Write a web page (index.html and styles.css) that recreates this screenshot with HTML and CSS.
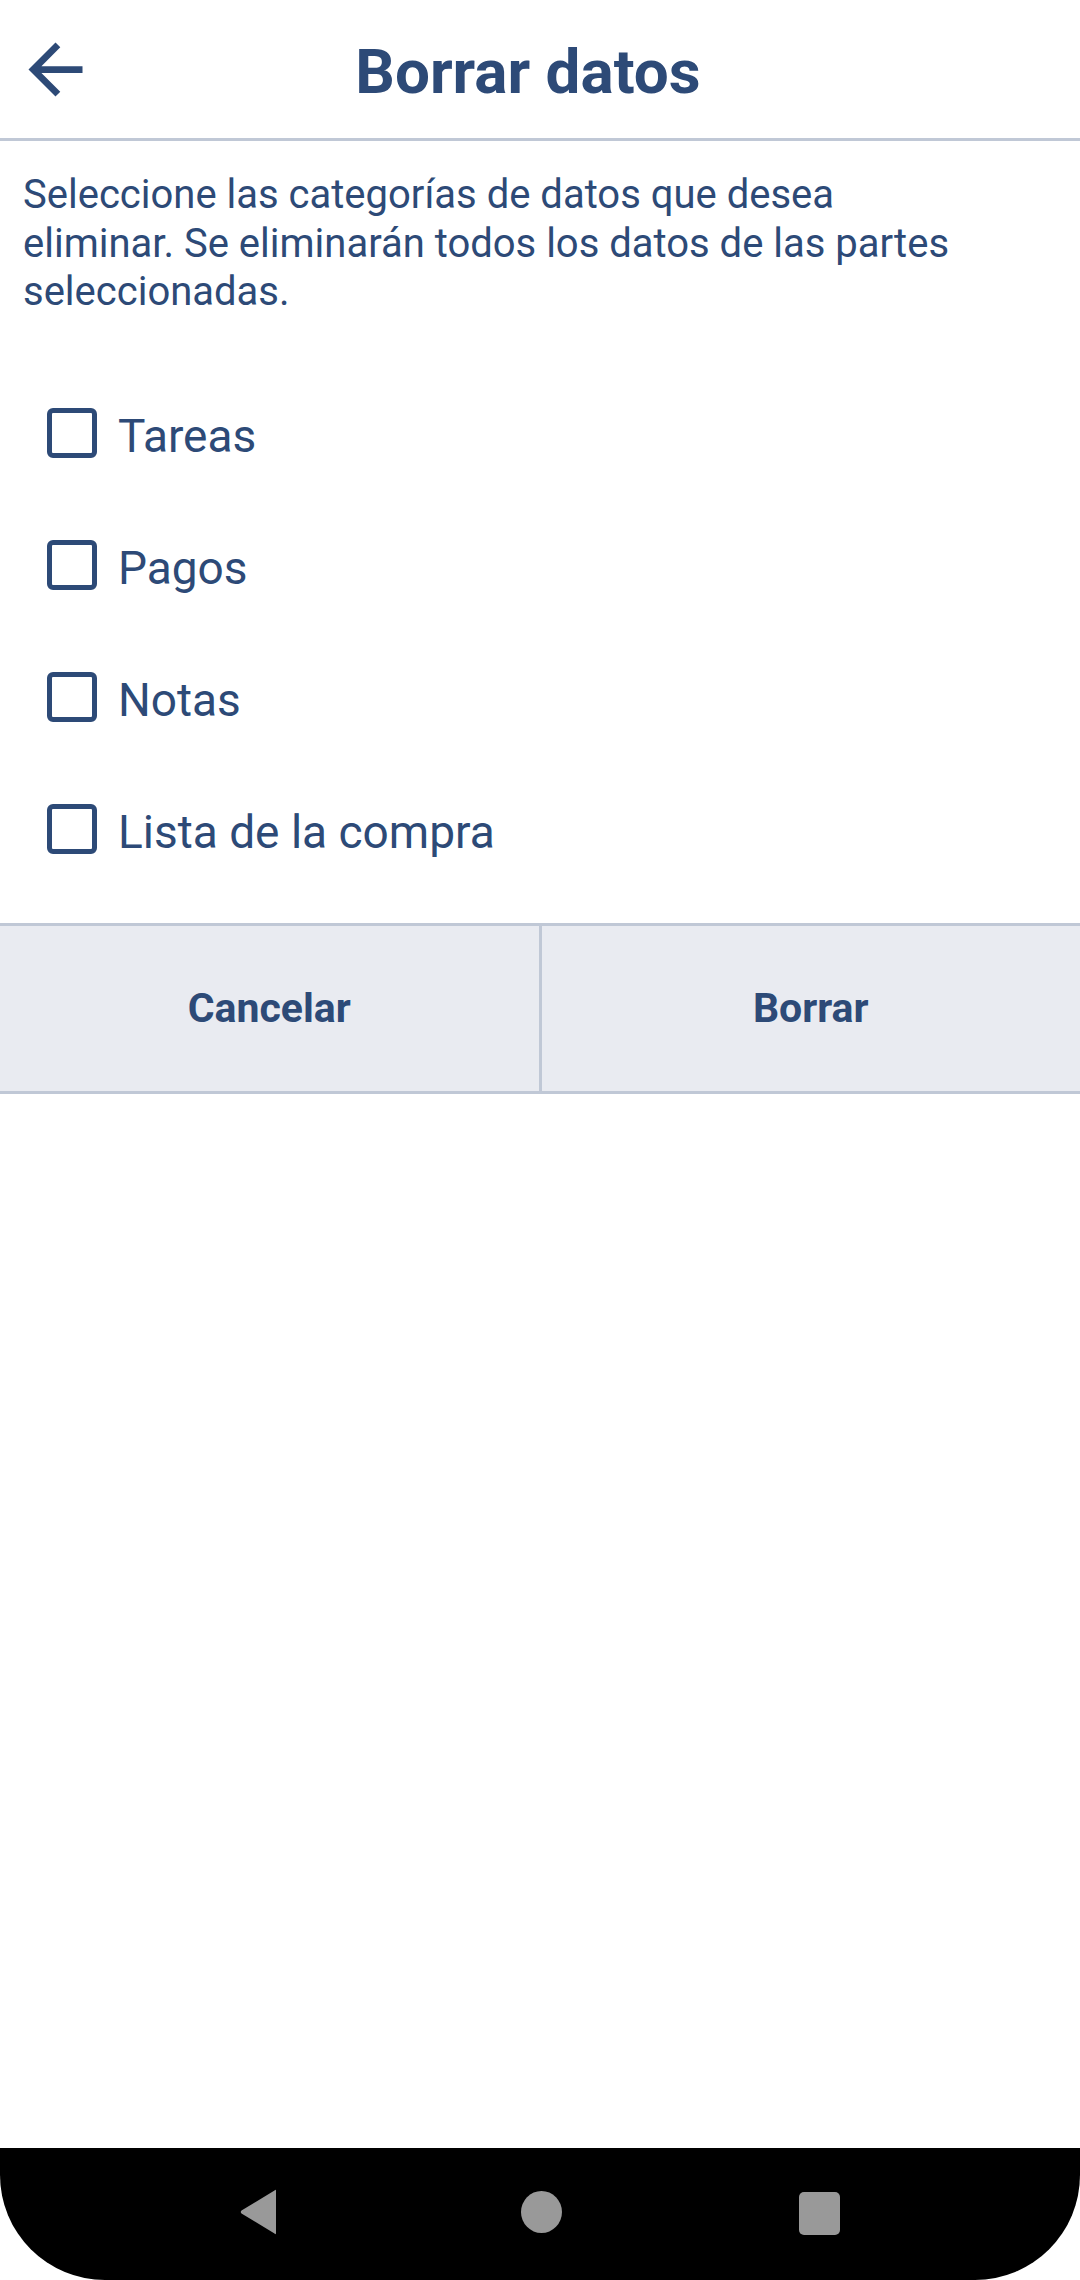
FILE: index.html
```html
<!DOCTYPE html>
<html lang="es">
<head>
<meta charset="utf-8">
<title>Borrar datos</title>
<link rel="stylesheet" href="styles.css">
</head>
<body>
<div class="screen">
  <header class="topbar">
    <button class="back" aria-label="Atrás">
      <svg viewBox="0 0 24 24" width="81" height="81"><path d="M20 11H7.83l5.59-5.59L12 4l-8 8 8 8 1.41-1.41L7.83 13H20v-2z" fill="currentColor"/></svg>
    </button>
    <h1 class="title">Borrar datos</h1>
    <div class="spacer"></div>
  </header>

  <p class="intro">Seleccione las categorías de datos que desea eliminar. Se eliminarán todos los datos de las partes seleccionadas.</p>

  <ul class="options">
    <li class="option"><span class="box"></span><span class="label">Tareas</span></li>
    <li class="option"><span class="box"></span><span class="label">Pagos</span></li>
    <li class="option"><span class="box"></span><span class="label">Notas</span></li>
    <li class="option"><span class="box"></span><span class="label">Lista de la compra</span></li>
  </ul>

  <div class="actions">
    <button class="action">Cancelar</button>
    <button class="action action-right">Borrar</button>
  </div>

  <div class="fill"></div>

  <nav class="navbar">
    <svg class="nav-back" viewBox="0 0 38 46" width="38" height="46"><path d="M36 2 L36 44 Q36 46 34.5 44.5 L1.5 24.5 Q0 23 1.5 21.5 L34.5 1.5 Q36 0 36 2Z" fill="#999"/></svg>
    <span class="nav-home"></span>
    <span class="nav-recent"></span>
  </nav>
</div>
</body>
</html>
```

FILE: styles.css
```css
* { box-sizing: border-box; }
html, body { margin: 0; padding: 0; background: #fff; }
body {
  font-family: Roboto, "Noto Sans", sans-serif;
  color: #2d4a77;
}
.screen {
  width: 1080px;
  height: 2280px;
  display: flex;
  flex-direction: column;
  background: #fff;
}
.topbar {
  height: 141px;
  display: flex;
  align-items: center;
  border-bottom: 3px solid #c0c8d6;
  padding-left: 15px;
}
.back {
  width: 81px;
  height: 81px;
  padding: 0;
  border: 0;
  background: none;
  color: #2d4a77;
  display: flex;
  margin-top: 1px;
}
.title {
  flex: 1;
  margin: 0;
  text-align: center;
  font-size: 62px;
  font-weight: 700;
  line-height: 1;
  margin-top: 6px;
}
.spacer { width: 120px; }
.intro {
  margin: 0;
  width: 960px;
  padding: 30px 0 0 23px;
  font-size: 40px;
  line-height: 48.5px;
}
.options {
  list-style: none;
  margin: 0;
  padding: 50px 0 28px 47px;
}
.option {
  height: 132px;
  display: flex;
  align-items: center;
  gap: 21px;
}
.box {
  width: 50px;
  height: 50px;
  border: 5px solid #2d4a77;
  border-radius: 6px;
  flex: none;
}
.label {
  font-size: 46px;
  margin-top: 6px;
}
.actions {
  display: flex;
  border-top: 3px solid #c0c8d6;
  border-bottom: 3px solid #c0c8d6;
  background: #e9ebf1;
}
.action {
  flex: 1;
  height: 165px;
  border: 0;
  background: none;
  font-family: Roboto, "Noto Sans", sans-serif;
  font-weight: 700;
  font-size: 41px;
  color: #2d4a77;
  padding: 0;
}
.action-right {
  border-left: 3px solid #c0c8d6;
}
.fill { flex: 1; }
.navbar {
  height: 132px;
  background: #000;
  border-radius: 0 0 105px 105px;
  display: flex;
  align-items: center;
  justify-content: center;
}
.nav-back { margin-top: -4px; }
.nav-home {
  width: 41px;
  height: 42px;
  border-radius: 50%;
  background: #999;
  margin-left: 243px;
  margin-top: -4px;
}
.nav-recent {
  width: 41px;
  height: 43px;
  border-radius: 5px;
  background: #999;
  margin-left: 237px;
  margin-top: -2px;
}
```
